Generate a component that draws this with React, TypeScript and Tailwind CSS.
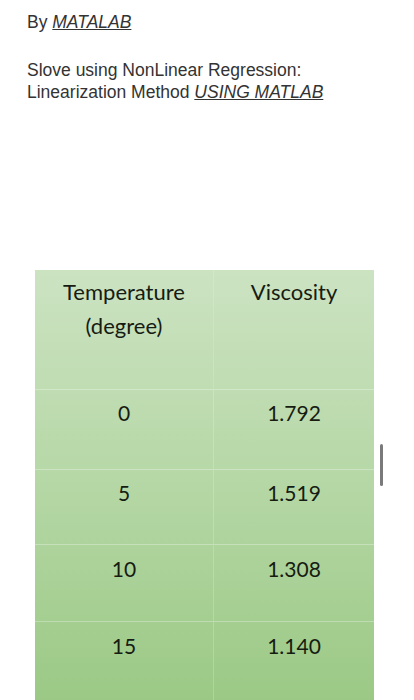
const rows = [
  { t: '0', v: '1.792', h: 'h-[80px]', pt: 'pt-[10px]' },
  { t: '5', v: '1.519', h: 'h-[75px]', pt: 'pt-[10px]' },
  { t: '10', v: '1.308', h: 'h-[77px]', pt: 'pt-[11px]' },
  { t: '15', v: '1.140', h: 'h-[80px]', pt: 'pt-[11px]' },
];

export default function App() {
  return (
    <div className="relative w-[414px] h-[700px] overflow-hidden bg-white font-['Liberation_Sans',Arial,sans-serif] text-[#333]">
      <div className="pl-[27px] pt-[11px] text-[17.5px] leading-[22px]">
        <p>
          By <span className="italic underline">MATALAB</span>
        </p>
        <p className="mt-[26px]">Slove using NonLinear Regression:</p>
        <p>
          Linearization Method <span className="italic underline">USING MATLAB</span>
        </p>
      </div>

      <div className="ml-[35px] mt-[167px] w-[339px] bg-linear-to-b from-[#cce3c2] via-[#b5d7a5] to-[#9bc985] font-['Lato','Open_Sans',sans-serif] text-[#161c12]">
        <div className="grid grid-cols-[178px_161px] h-[119px]">
          <div className="pt-[5px] text-center text-[22px] leading-[34px]">
            Temperature
            <br />
            (degree)
          </div>
          <div className="pt-[5px] text-center text-[22px] leading-[34px] border-l border-white/15">
            Viscosity
          </div>
        </div>
        {rows.map((r) => (
          <div key={r.t} className={`grid grid-cols-[178px_161px] border-t border-white/30 ${r.h}`}>
            <div className={`text-center text-[21px] leading-[26px] ${r.pt}`}>{r.t}</div>
            <div className={`text-center text-[21px] leading-[26px] border-l border-white/20 ${r.pt}`}>{r.v}</div>
          </div>
        ))}
      </div>

      <div className="absolute left-[380px] top-[444px] w-[3px] h-[42px] rounded-full bg-[#7a7a7a]" />
    </div>
  );
}
